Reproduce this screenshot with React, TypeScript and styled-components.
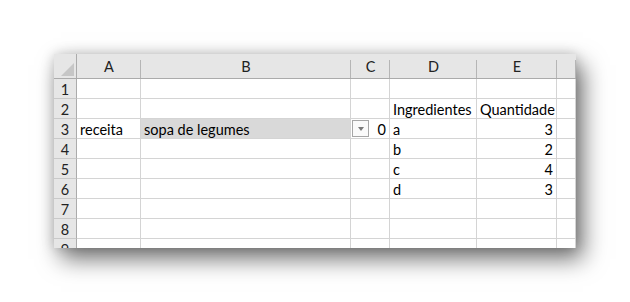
import React from 'react'
import styled, { createGlobalStyle } from 'styled-components'

const GlobalStyle = createGlobalStyle`
  html, body {
    margin: 0;
    padding: 0;
    background: #ffffff;
  }
`

const Page = styled.div`
  width: 630px;
  height: 302px;
  padding: 54px 0 0 54px;
  box-sizing: border-box;
  overflow: hidden;
`

const Sheet = styled.div`
  width: 522px;
  height: 194px;
  overflow: hidden;
  background: #ffffff;
  box-shadow: 7px 11px 22px rgba(0, 0, 0, 0.55), 0 0 12px rgba(0, 0, 0, 0.18);
  display: grid;
  grid-template-columns: 23px 64px 210px 39px 87px 80px 19px;
  grid-template-rows: 25px repeat(9, 20px);
  font-family: Lato, 'Open Sans', sans-serif;
  font-size: 14.5px;
  color: #000;
`

const Corner = styled.div`
  background: #e6e6e6;
  border-bottom: 1px solid #ababab;
  border-right: 1px solid #ababab;
  box-sizing: border-box;
  position: relative;
  &::after {
    content: '';
    position: absolute;
    right: 2px;
    bottom: 2px;
    width: 0;
    height: 0;
    border-style: solid;
    border-width: 0 0 13px 13px;
    border-color: transparent transparent #c6c6c6 transparent;
  }
`

const ColHead = styled.div`
  background: #e6e6e6;
  border-bottom: 1px solid #ababab;
  box-sizing: border-box;
  position: relative;
  display: flex;
  align-items: flex-end;
  justify-content: center;
  padding-bottom: 3px;
  color: #222;
  &::after {
    content: '';
    position: absolute;
    right: 0;
    top: 6px;
    bottom: 0;
    width: 1px;
    background: #b5b5b5;
  }
`

const RowHead = styled.div`
  background: #e6e6e6;
  border-right: 1px solid #ababab;
  border-bottom: 1px solid #c9c9c9;
  box-sizing: border-box;
  display: flex;
  align-items: center;
  justify-content: center;
  color: #222;
  padding-top: 1px;
`

const Cell = styled.div<{ $right?: boolean; $fill?: boolean }>`
  border-right: 1px solid #d4d4d4;
  border-bottom: 1px solid #d4d4d4;
  box-sizing: border-box;
  background: ${p => (p.$fill ? '#d9d9d9' : '#ffffff')};
  display: flex;
  align-items: center;
  justify-content: ${p => (p.$right ? 'flex-end' : 'flex-start')};
  padding: 1px 3px 0 3px;
  white-space: nowrap;
  position: relative;
`

const DropButton = styled.div`
  position: absolute;
  left: 1px;
  top: 1px;
  width: 17px;
  height: 17px;
  box-sizing: border-box;
  border: 1px solid #a6a6a6;
  background: #fafafa;
  display: flex;
  align-items: center;
  justify-content: center;
  &::after {
    content: '';
    border-style: solid;
    border-width: 4px 3.5px 0 3.5px;
    border-color: #7a7a7a transparent transparent transparent;
  }
`

const cols = ['A', 'B', 'C', 'D', 'E', '']

type Row = { [k: string]: string }

const data: Row[] = [
  {},
  { D: 'Ingredientes', E: 'Quantidade' },
  { A: 'receita', B: 'sopa de legumes', C: '0', D: 'a', E: '3' },
  { D: 'b', E: '2' },
  { D: 'c', E: '4' },
  { D: 'd', E: '3' },
  {},
  {},
  {},
]

const numeric = (v?: string) => !!v && /^\d+$/.test(v)

export default function App() {
  return (
    <>
      <GlobalStyle />
      <Page>
        <Sheet>
          <Corner />
          {cols.map((c, i) => (
            <ColHead key={i}>{c}</ColHead>
          ))}
          {data.map((row, r) => (
            <React.Fragment key={r}>
              <RowHead>{r + 1}</RowHead>
              {cols.map((c, i) => {
                const v = c ? row[c] : undefined
                const fill = r === 2 && c === 'B'
                return (
                  <Cell key={i} $right={numeric(v)} $fill={fill}>
                    {r === 2 && c === 'C' && <DropButton />}
                    {v}
                  </Cell>
                )
              })}
            </React.Fragment>
          ))}
        </Sheet>
      </Page>
    </>
  )
}
